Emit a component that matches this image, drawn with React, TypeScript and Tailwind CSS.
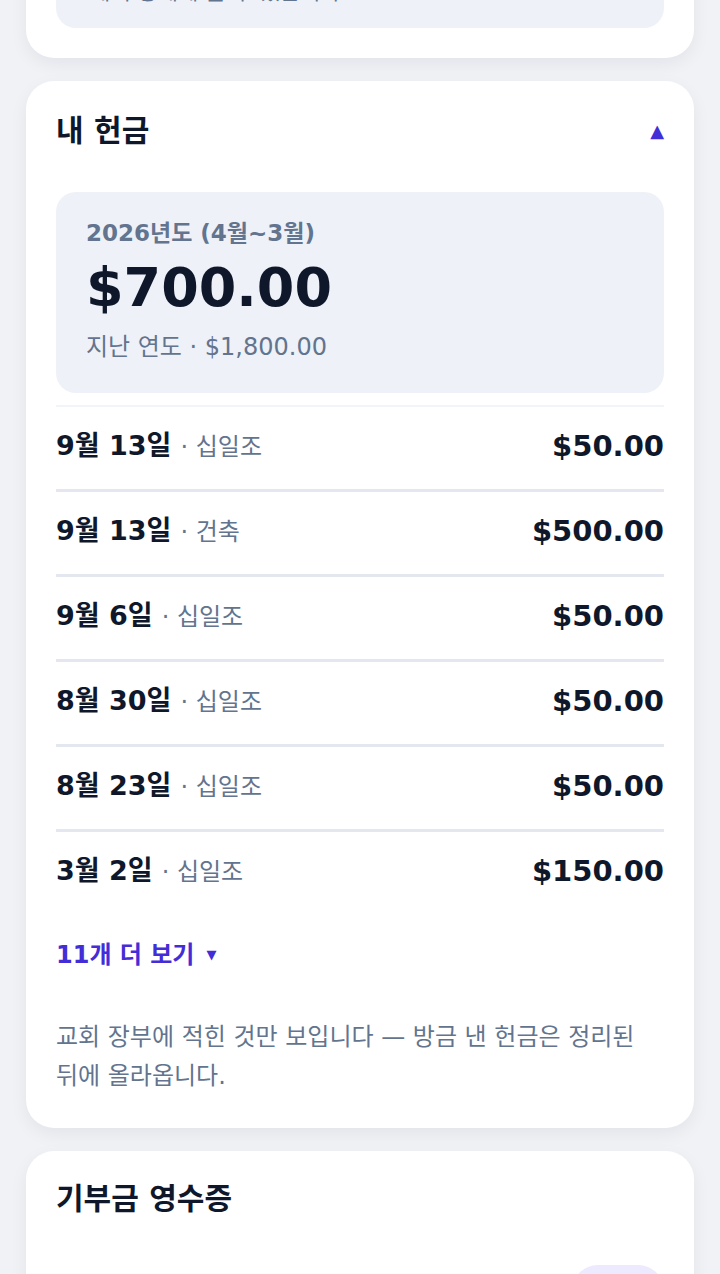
import { useState } from 'react';

type Gift = {
  date: string;
  fund: string;
  amount: string;
};

const gifts: Gift[] = [
  { date: '9월 13일', fund: '십일조', amount: '$50.00' },
  { date: '9월 13일', fund: '건축', amount: '$500.00' },
  { date: '9월 6일', fund: '십일조', amount: '$50.00' },
  { date: '8월 30일', fund: '십일조', amount: '$50.00' },
  { date: '8월 23일', fund: '십일조', amount: '$50.00' },
  { date: '3월 2일', fund: '십일조', amount: '$150.00' },
];

const font = "font-['DejaVu_Sans','Noto_Sans_CJK_KR',sans-serif]";

export default function App() {
  const [open, setOpen] = useState(true);

  return (
    <div className={`h-[1274px] overflow-hidden bg-[#f1f2f6] ${font}`}>
      <div className="-mt-[74px] flex flex-col gap-[23px] px-[26px]">
        {/* previous card, scrolled mostly out of view */}
        <section className="rounded-[28px] bg-white p-[30px] shadow-[0_6px_18px_rgba(15,23,42,0.06)]">
          <div className="rounded-[20px] bg-[#eef1f7] px-[34px] pb-[19px] pt-[19px]">
            <p className="text-[22px] leading-[34px] text-slate-500">세액 공제에 쓸 수 있습니다</p>
          </div>
        </section>

        <section className="rounded-[28px] bg-white px-[30px] pb-[32px] pt-[32px] shadow-[0_6px_18px_rgba(15,23,42,0.06)]">
          <button
            type="button"
            onClick={() => setOpen((value) => !value)}
            className="flex w-full items-center justify-between"
          >
            <h2 className="text-[30px] font-bold leading-[36px] text-slate-900">내 헌금</h2>
            <span className="text-[18px] leading-none text-indigo-700" aria-hidden="true">
              {open ? '▲' : '▼'}
            </span>
          </button>

          <div className="mt-[43px] rounded-[20px] bg-[#eef1f7] px-[30px] pb-[29px] pt-[26px]">
            <p className="text-[23px] font-bold leading-[30px] text-slate-500">2026년도 (4월~3월)</p>
            <p className="mt-[9px] text-[54px] font-bold leading-[62px] text-slate-900">$700.00</p>
            <p className="mt-[11px] text-[24px] leading-[34px] text-slate-500">지난 연도 · $1,800.00</p>
          </div>

          <ul className="mt-[12px] border-t-2 border-slate-100">
            {gifts.map((gift, i) => (
              <li
                key={i}
                className={`flex items-center justify-between pb-[3px] ${i > 0 ? 'h-[85px] border-t-[3px] border-[#e4e7f0]' : 'h-[82px]'}`}
              >
                <p className="text-[27px] font-bold text-slate-900">
                  {gift.date}
                  <span className="ml-[9px] text-[24px] font-normal text-slate-500">· {gift.fund}</span>
                </p>
                <span className="text-[29px] font-bold text-slate-900">{gift.amount}</span>
              </li>
            ))}
          </ul>

          <button type="button" className="mt-[24px] flex items-center gap-[12px] text-indigo-700">
            <span className="text-[24px] font-bold leading-[34px]">11개 더 보기</span>
            <span className="text-[13px]">▼</span>
          </button>

          <p className="mt-[46px] text-[24px] leading-[39px] text-slate-500">
            교회 장부에 적힌 것만 보입니다 — 방금 낸 헌금은 정리된 뒤에 올라옵니다.
          </p>
        </section>

        <section className="rounded-[28px] bg-white px-[30px] pb-[30px] pt-[30px] shadow-[0_6px_18px_rgba(15,23,42,0.06)]">
          <h2 className="text-[30px] font-bold leading-[36px] text-slate-900">기부금 영수증</h2>
          <div className="mt-[48px] flex items-start justify-between">
            <p className="pt-[20px] text-[24px] leading-[34px] text-slate-500">2025년 영수증</p>
            <button type="button" className="h-[52px] rounded-full bg-violet-100 px-[26px] text-[22px] font-bold text-indigo-700">
              받기
            </button>
          </div>
        </section>
      </div>
    </div>
  );
}
